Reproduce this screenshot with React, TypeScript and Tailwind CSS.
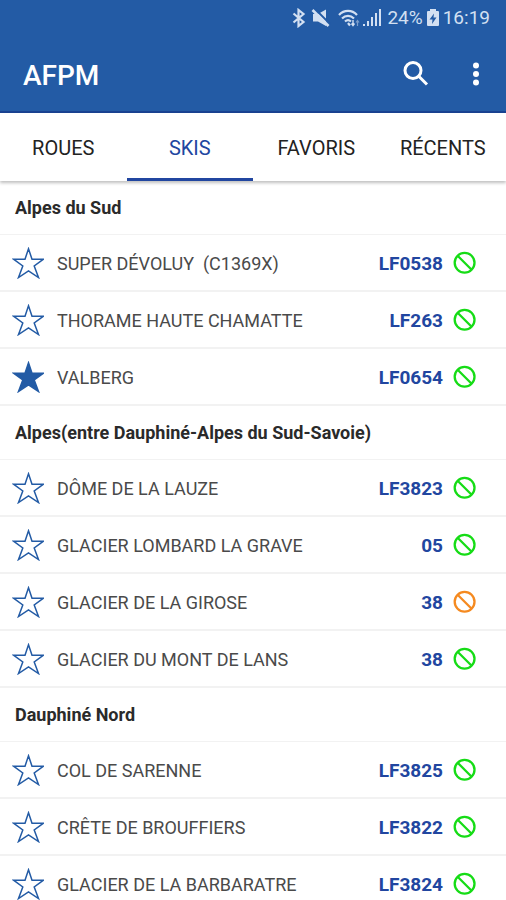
import { useState } from 'react'

type Status = 'open' | 'restricted'

interface Site {
  name: string
  code: string
  status: Status
}

interface Region {
  title: string
  sites: Site[]
}

const TABS = ['ROUES', 'SKIS', 'FAVORIS', 'RÉCENTS']

const REGIONS: Region[] = [
  {
    title: 'Alpes du Sud',
    sites: [
      { name: 'SUPER DÉVOLUY  (C1369X)', code: 'LF0538', status: 'open' },
      { name: 'THORAME HAUTE CHAMATTE', code: 'LF263', status: 'open' },
      { name: 'VALBERG', code: 'LF0654', status: 'open' },
    ],
  },
  {
    title: 'Alpes(entre Dauphiné-Alpes du Sud-Savoie)',
    sites: [
      { name: 'DÔME DE LA LAUZE', code: 'LF3823', status: 'open' },
      { name: 'GLACIER LOMBARD LA GRAVE', code: '05', status: 'open' },
      { name: 'GLACIER DE LA GIROSE', code: '38', status: 'restricted' },
      { name: 'GLACIER DU MONT DE LANS', code: '38', status: 'open' },
    ],
  },
  {
    title: 'Dauphiné Nord',
    sites: [
      { name: 'COL DE SARENNE', code: 'LF3825', status: 'open' },
      { name: 'CRÊTE DE BROUFFIERS', code: 'LF3822', status: 'open' },
      { name: 'GLACIER DE LA BARBARATRE', code: 'LF3824', status: 'open' },
    ],
  },
]

const StatusBar = () => (
  <div className="flex h-9 items-center justify-end pr-4 text-[19px] text-[#d3e0f2]">
    <svg className="h-5 w-4" viewBox="0 0 16 20" fill="none" stroke="currentColor" strokeWidth="2.200">
      <path d="M2.500 5.500l10 8.500-5 4V2l5 4-10 8.500" />
    </svg>
    <svg className="ml-1 h-5 w-5" viewBox="0 0 20 20" fill="currentColor">
      <path d="M2 6h5l8-4.500V18L7 13.500H2z" />
      <path d="M3.500 0.500l16 16" stroke="#235ba5" strokeWidth="2" />
      <path d="M1.500 2l16 16" stroke="currentColor" strokeWidth="2.600" />
    </svg>
    <svg className="ml-1.5 h-5 w-6" viewBox="0 0 24 20" fill="none" stroke="currentColor" strokeWidth="2.200">
      <path d="M2 7c5-5.500 13-5.500 18 0M5 10.500c3.500-3.500 8.500-3.500 12 0M8 13.500c2-1.800 4-1.800 6 0" />
      <path d="M11 15l2 2.500" />
      <path d="M16 12v5M14.500 15.500l1.500 2 1.500-2" strokeWidth="1.400" />
      <path d="M20.500 18v-5M19 14.500l1.500-2 1.500 2" strokeWidth="1.200" opacity="0.500" />
    </svg>
    <svg className="h-5 w-5" viewBox="0 0 20 20" fill="currentColor">
      <path d="M2 16h2v2H2zM6 13h2v5H6zM10 9h2v9h-2zM14 5h2v13h-2zM18 1h2v17h-2z" />
    </svg>
    <span className="ml-1.5">24%</span>
    <svg className="ml-1 h-5 w-3" viewBox="0 0 12 20" fill="currentColor">
      <path d="M3 1h6v2H11q1 0 1 1v13q0 1-1 1H1q-1 0-1-1V4q0-1 1-1h2z" />
      <path d="M7 5.500l-4.500 6h3L5 16 9.500 9.500h-3z" fill="#235ba5" />
    </svg>
    <span className="ml-1">16:19</span>
  </div>
)

const StarIcon = ({ filled }: { filled: boolean }) => (
  <svg className="h-8 w-8" viewBox="0 0 32 32" fill={filled ? 'currentColor' : 'none'} stroke="currentColor" strokeWidth="1.500">
    <path d="M16.500 1.800L20 12.200H31.500L22.200 18.900L26.500 30.500L16.500 23.800L6.500 30.500L10.800 18.900L1.500 12.200H13Z" />
  </svg>
)

const StatusIcon = ({ status }: { status: Status }) => (
  <svg
    className={status === 'open' ? 'h-6 w-6 text-[#16dc16]' : 'h-6 w-6 text-[#f58a20]'}
    viewBox="0 0 24 24"
    fill="none"
    stroke="currentColor"
    strokeWidth="2.300"
  >
    <circle cx="11.600" cy="11.700" r="9.900" />
    <path d="M4.600 4.700l14 14" />
  </svg>
)

export default function App() {
  const [activeTab, setActiveTab] = useState('SKIS')
  const [favorites, setFavorites] = useState(['VALBERG'])

  const toggleFavorite = (name: string) => {
    setFavorites((prev) => (prev.includes(name) ? prev.filter((n) => n !== name) : [...prev, name]))
  }

  return (
    <div className="flex h-screen flex-col bg-white font-['Roboto',sans-serif]">
      <header className="shrink-0 border-b-2 border-[#194291] bg-[#235ba5]">
        <StatusBar />
        <div className="flex h-[75px] items-center pr-2.5 pl-[23px] text-white">
          <h1 className="flex-1 pt-1 text-[28px] font-medium">AFPM</h1>
          <button type="button" aria-label="Rechercher" className="flex h-10 w-10 items-center justify-center">
            <svg className="h-7 w-7" viewBox="0 0 28 28" fill="none" stroke="currentColor" strokeWidth="3">
              <circle cx="11" cy="10.500" r="8" />
              <path d="M16.500 16l8.500 8.500" />
            </svg>
          </button>
          <button type="button" aria-label="Plus d'options" className="ml-5 flex h-10 w-10 items-center justify-center">
            <svg className="h-7 w-7" viewBox="0 0 28 28" fill="currentColor">
              <circle cx="14" cy="5.500" r="3" />
              <circle cx="14" cy="14" r="3" />
              <circle cx="14" cy="22.500" r="3" />
            </svg>
          </button>
        </div>
      </header>

      <nav className="relative z-10 grid h-17 shrink-0 grid-cols-4 bg-white shadow-[0_2px_3px_rgba(0,0,0,0.25)]">
        {TABS.map((tab) => (
          <button
            key={tab}
            type="button"
            onClick={() => setActiveTab(tab)}
            className={
              tab === activeTab
                ? 'border-b-3 border-[#2146a0] pt-1 text-xl text-[#2146a0]'
                : 'border-b-3 border-transparent pt-1 text-xl text-[#222222]'
            }
          >
            {tab}
          </button>
        ))}
      </nav>

      <main className="flex-1 overflow-y-auto [scrollbar-width:none]">
        {REGIONS.map((region) => (
          <section key={region.title}>
            <h2 className="flex h-[54px] items-center border-b border-[#f2f2f2] px-[15px] text-lg font-bold text-[#2a2a2a]">
              {region.title}
            </h2>
            <ul>
              {region.sites.map((site) => (
                <li key={site.name} className="flex h-[57px] items-center border-b-2 border-[#f2f2f2] pr-[29px] pl-3">
                  <button
                    type="button"
                    aria-label={`Favori ${site.name}`}
                    aria-pressed={favorites.includes(site.name)}
                    onClick={() => toggleFavorite(site.name)}
                    className="text-[#235ba5]"
                  >
                    <StarIcon filled={favorites.includes(site.name)} />
                  </button>
                  <span className="ml-[13px] flex-1 pt-0.5 text-lg whitespace-pre text-[#4a4a4a]">{site.name}</span>
                  <span className="mr-2.5 pt-1 text-[19px] font-bold text-[#2146a0]">{site.code}</span>
                  <StatusIcon status={site.status} />
                </li>
              ))}
            </ul>
          </section>
        ))}
      </main>
    </div>
  )
}
